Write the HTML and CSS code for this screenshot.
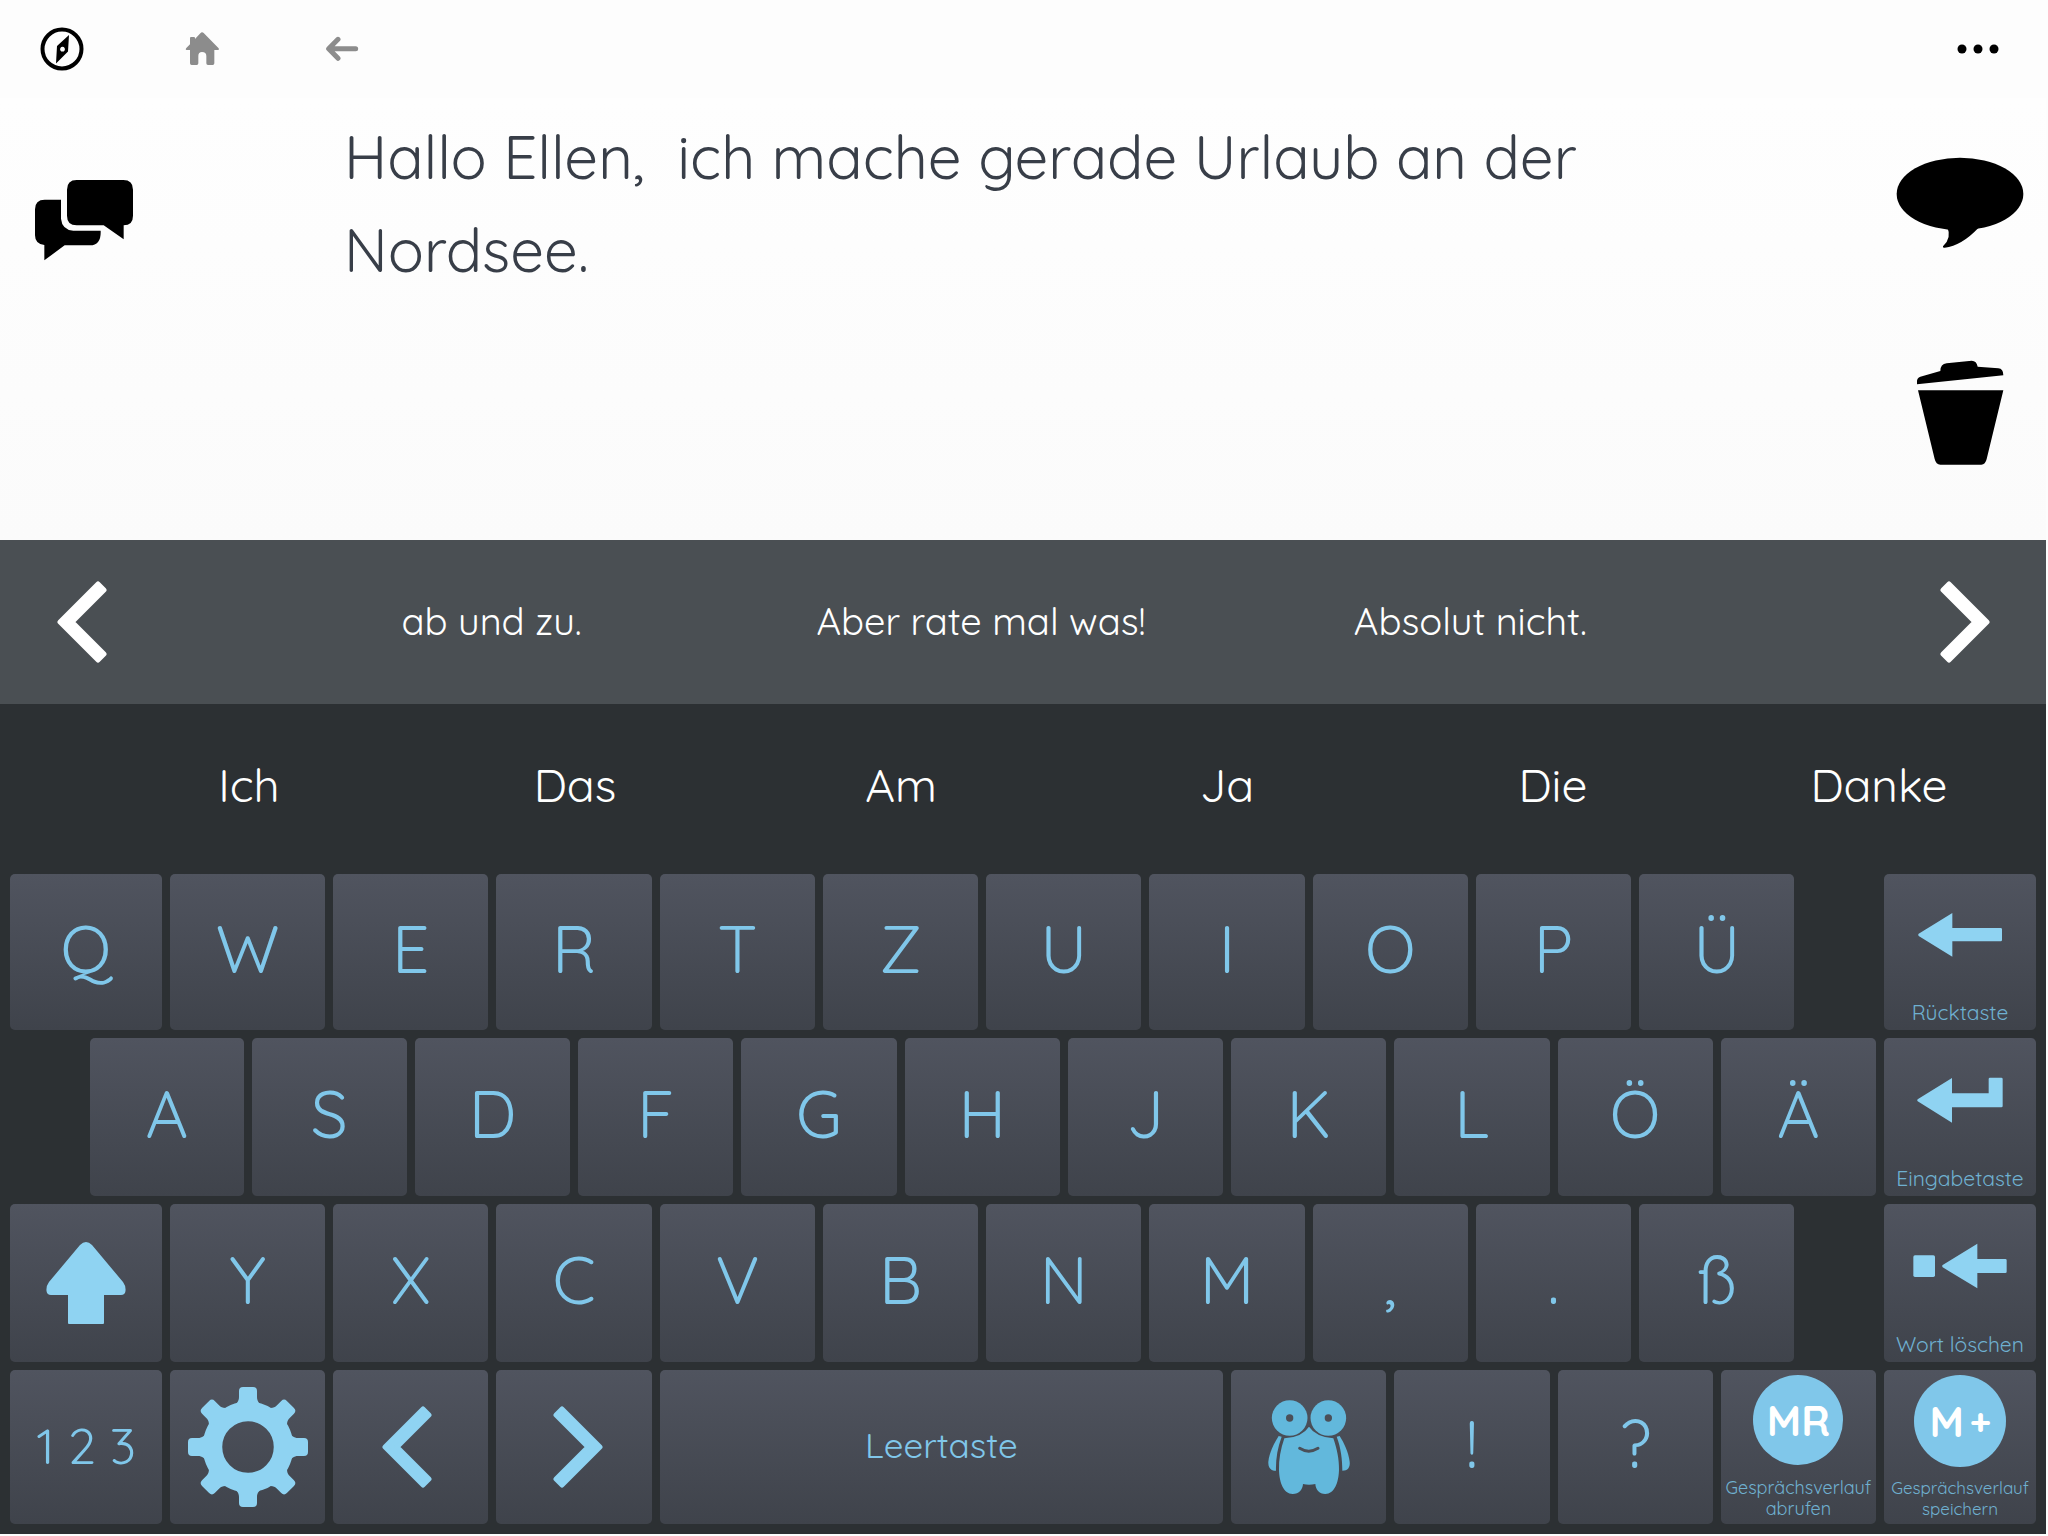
FILE: index.html
```html
<!DOCTYPE html>
<html lang="de">
<head>
    <meta charset="UTF-8">
    <meta name="viewport" content="width=device-width, initial-scale=1.0">
    <title>Tastatur</title>
    <link rel="stylesheet" href="styles.css">
</head>
<body>

    <div class="app">
        <header class="topbar">
            <button type="button" class="nav-btn" aria-label="Navigation">
                <svg width="44" height="44" viewBox="40 26 44 44">
                    <circle cx="62" cy="48" r="19.5" fill="none" stroke="#000" stroke-width="4"/>
                    <path fill-rule="evenodd" d="M69 34L68 50.500L56 62.500L57 45ZM62.500 45.800a2.400 2.400 0 1 0 0.010 0Z"/>
                </svg>
            </button>
            <button type="button" class="nav-btn" aria-label="Startseite">
                <svg class="grey" width="34" height="34" viewBox="556 96 102 102">
                    <path d="M607 97Q610 97 612 99L657 145Q659 150 654 150H644V190Q644 195 639 195H625Q620 195 620 190V168Q620 156 607 156Q596 156 596 168V190Q596 195 591 195H576Q571 195 571 190V150H561Q556 149 560 144L571 133V114Q571 111 574 111H583Q586 111 586 114V117L602 100Q605 97 607 97Z"/>
                </svg>
            </button>
            <button type="button" class="nav-btn" aria-label="Zurück">
                <svg class="grey-line" width="34" height="26" viewBox="977 107 102 78">
                    <path d="M1069 145.500H990M1016 117L988 145.500L1016 174"/>
                </svg>
            </button>
            <button type="button" class="nav-btn menu-btn" aria-label="Mehr">
                <svg width="42" height="10" viewBox="0 0 42 10">
                    <circle cx="5" cy="5" r="4.500"/>
                    <circle cx="21" cy="5" r="4.500"/>
                    <circle cx="37" cy="5" r="4.500"/>
                </svg>
            </button>
        </header>

        <main class="message">
            <button type="button" class="chat-btn" aria-label="Gespräche">
                <svg width="100" height="82" viewBox="104 537 300 246">
                    <path d="M232 540H372Q401 540 401 569V647Q401 676 373 676V718L313 676H232Q203 676 203 647V569Q203 540 232 540Z"/>
                    <path d="M136 599H185V656Q188 689 222 692H304Q306 736 272 736H196L135 781V735Q107 732 107 706V628Q107 599 136 599Z"/>
                </svg>
            </button>
            <textarea class="message-text" aria-label="Nachricht" spellcheck="false">Hallo Ellen,  ich mache gerade Urlaub an der Nordsee.</textarea>
            <div class="message-actions">
                <button type="button" aria-label="Sprechen">
                    <svg width="128" height="92" viewBox="168 469 384 276">
                        <ellipse cx="360" cy="580" rx="190" ry="109"/>
                        <path d="M322 680Q336 712 309 737Q307 742 314 741Q365 735 415 682Z"/>
                    </svg>
                </button>
                <button type="button" aria-label="Löschen">
                    <svg width="88" height="106" viewBox="228 1087 264 318">
                        <path d="M231 1160V1150Q231 1141 241 1137L301 1120Q301 1099 320 1097L395 1089Q410 1089 413 1107L475 1112Q490 1113 490 1133Z"/>
                        <path d="M234 1178H490L440 1384Q436 1401 424 1401H301Q288 1401 284 1384Z"/>
                    </svg>
                </button>
            </div>
        </main>

        <section class="phrases">
            <button type="button" class="page-btn" aria-label="Vorherige">
                <svg width="50" height="84" viewBox="0 0 50 84">
                    <path class="chevron" d="M3 42L41 4L47 10L15 42L47 74L41 80Z"/>
                </svg>
            </button>
            <div class="phrase-list">
                <button type="button">ab und zu.</button>
                <button type="button">Aber rate mal was!</button>
                <button type="button">Absolut nicht.</button>
            </div>
            <button type="button" class="page-btn" aria-label="Nächste">
                <svg width="50" height="84" viewBox="0 0 50 84">
                    <path class="chevron" d="M47 42L9 4L3 10L35 42L3 74L9 80Z"/>
                </svg>
            </button>
        </section>

        <section class="words">
            <button type="button">Ich</button>
            <button type="button">Das</button>
            <button type="button">Am</button>
            <button type="button">Ja</button>
            <button type="button">Die</button>
            <button type="button">Danke</button>
        </section>

        <section class="keyboard">
            <button type="button" class="key">Q</button>
            <button type="button" class="key">W</button>
            <button type="button" class="key">E</button>
            <button type="button" class="key">R</button>
            <button type="button" class="key">T</button>
            <button type="button" class="key">Z</button>
            <button type="button" class="key">U</button>
            <button type="button" class="key">I</button>
            <button type="button" class="key">O</button>
            <button type="button" class="key">P</button>
            <button type="button" class="key">Ü</button>
            <button type="button" class="key action last">
                <span class="icon">
                    <svg width="86" height="46" viewBox="894 215 258 138">
                        <path d="M899 280L1000 218V263H1145Q1149 263 1149 267V299Q1149 303 1145 303H1000V349L899 287Q896 283 899 280Z"/>
                    </svg>
                </span>
                <span class="caption">Rücktaste</span>
            </button>

            <button type="button" class="key indent">A</button>
            <button type="button" class="key">S</button>
            <button type="button" class="key">D</button>
            <button type="button" class="key">F</button>
            <button type="button" class="key">G</button>
            <button type="button" class="key">H</button>
            <button type="button" class="key">J</button>
            <button type="button" class="key">K</button>
            <button type="button" class="key">L</button>
            <button type="button" class="key">Ö</button>
            <button type="button" class="key">Ä</button>
            <button type="button" class="key action last">
                <span class="icon">
                    <svg width="88" height="46" viewBox="892 708 264 138">
                        <path d="M897 775L1000 711V757H1110V714Q1110 710 1114 710H1148Q1152 710 1152 714V795Q1152 799 1148 799H1000V845L897 781Q894 778 897 775Z"/>
                    </svg>
                </span>
                <span class="caption">Eingabetaste</span>
            </button>

            <button type="button" class="key" aria-label="Umschalttaste">
                <svg width="80" height="84" viewBox="0 0 80 84">
                    <path d="M34 4Q40 -2 46 4L77 41Q80 45 79.500 50Q79 54 75 54H58V82Q58 83 57 83H23Q22 83 22 82V54H5Q1 54 0.500 50Q0 45 3 41Z"/>
                </svg>
            </button>
            <button type="button" class="key">Y</button>
            <button type="button" class="key">X</button>
            <button type="button" class="key">C</button>
            <button type="button" class="key">V</button>
            <button type="button" class="key">B</button>
            <button type="button" class="key">N</button>
            <button type="button" class="key">M</button>
            <button type="button" class="key">,</button>
            <button type="button" class="key">.</button>
            <button type="button" class="key">ß</button>
            <button type="button" class="key action last">
                <span class="icon">
                    <svg width="96" height="46" viewBox="878 157 288 138">
                        <rect x="882" y="194" width="65" height="65" rx="5"/>
                        <path d="M970 223L1074 159V205H1158Q1162 205 1162 209V243Q1162 247 1158 247H1074V293L970 230Q967 226 970 223Z"/>
                    </svg>
                </span>
                <span class="caption">Wort löschen</span>
            </button>

            <button type="button" class="key numbers">1 2 3</button>
            <button type="button" class="key" aria-label="Einstellungen">
                <svg width="120" height="120" viewBox="-60 -60 120 120">
                    <defs>
                        <path id="tooth" d="M-17 -40C-11 -43 -9 -46 -9 -50V-56Q-9 -60 -5 -60H5Q9 -60 9 -56V-50C9 -46 11 -43 17 -40Z"/>
                    </defs>
                    <circle r="35.500" fill="none" stroke="#8fd3f2" stroke-width="19.500"/>
                    <use href="#tooth"/>
                    <use href="#tooth" transform="rotate(45)"/>
                    <use href="#tooth" transform="rotate(90)"/>
                    <use href="#tooth" transform="rotate(135)"/>
                    <use href="#tooth" transform="rotate(180)"/>
                    <use href="#tooth" transform="rotate(225)"/>
                    <use href="#tooth" transform="rotate(270)"/>
                    <use href="#tooth" transform="rotate(315)"/>
                </svg>
            </button>
            <button type="button" class="key" aria-label="Cursor links">
                <svg width="58" height="84" viewBox="0 0 58 84">
                    <path class="chevron" d="M3 42L41 4L47 10L15 42L47 74L41 80Z"/>
                </svg>
            </button>
            <button type="button" class="key" aria-label="Cursor rechts">
                <svg width="58" height="84" viewBox="-8 0 58 84">
                    <path class="chevron" d="M47 42L9 4L3 10L35 42L3 74L9 80Z"/>
                </svg>
            </button>
            <button type="button" class="key space">Leertaste</button>
            <button type="button" class="key" aria-label="Figur">
                <svg class="monster" width="84" height="96" viewBox="198 147 252 288">
                    <circle cx="266" cy="204" r="53.500"/>
                    <circle cx="382" cy="204" r="53.500"/>
                    <path d="M324 230Q344 260 397 265C408 296 415 330 414 360C413 398 400 432 373 432C354 432 344 418 343 402Q324 406 306 402C305 418 295 432 275 432C248 432 235 398 234 360C233 330 239 296 250 265Q303 262 324 230Z"/>
                    <path d="M233 258L242 260C229 294 224 330 225 362C208 362 201 352 202 335C205 308 220 278 233 258Z"/>
                    <path d="M416 258L407 260C420 294 424 330 424 362C440 362 448 352 446 335C443 308 429 278 416 258Z"/>
                    <circle class="dark" cx="266" cy="204" r="11"/>
                    <circle class="dark" cx="382" cy="204" r="11"/>
                    <path class="smile" d="M296 295Q323 312 351 295"/>
                </svg>
            </button>
            <button type="button" class="key">!</button>
            <button type="button" class="key">?</button>
            <button type="button" class="key memory">
                <span class="badge">MR</span>
                <span class="caption">Gesprächsverlauf<br>abrufen</span>
            </button>
            <button type="button" class="key memory save last">
                <span class="badge">M<span class="plus">+</span></span>
                <span class="caption">Gesprächsverlauf<br>speichern</span>
            </button>
        </section>
    </div>

</body>
</html>
```
FILE: styles.css
```css
* {
    box-sizing: border-box;
}
body {
    margin: 0;
    padding: 0 2px 2px 0;
    background: #fdfdfd;
    font-family: Quicksand, Lato, sans-serif;
}
button {
    display: flex;
    align-items: center;
    justify-content: center;
    padding: 0;
    border: none;
    background: none;
    color: inherit;
    font: inherit;
    cursor: pointer;
}
svg {
    display: block;
}
.app {
    display: flex;
    flex-direction: column;
    min-height: calc(100vh - 2px);
    background: #2c3033;
}

/* top bar */
.topbar {
    display: flex;
    gap: 16px;
    height: 98px;
    padding-right: 6px;
    background: #fdfdfd;
}
.nav-btn {
    width: 124px;
}
.menu-btn {
    margin-left: auto;
}
.grey {
    fill: #8c8c8c;
}
.grey-line {
    fill: none;
    stroke: #8c8c8c;
    stroke-width: 15;
    stroke-linecap: round;
    stroke-linejoin: round;
}

/* message */
.message {
    display: flex;
    height: 442px;
    background: linear-gradient(#fefefe, #fbfbfb);
}
.chat-btn {
    width: 168px;
    height: 244px;
}
.message-text {
    flex: 1;
    margin: 0 96px 0 176px;
    padding: 12px 0 0;
    border: none;
    outline: none;
    resize: none;
    overflow: hidden;
    background: none;
    color: #383e48;
    font-family: inherit;
    font-size: 60px;
    line-height: 93px;
}
.message-actions {
    display: flex;
    flex-direction: column;
    width: 172px;
    padding-bottom: 22px;
}
.message-actions button {
    flex: 1;
}

/* phrases and words */
.phrases {
    display: flex;
    height: 164px;
    background: #4a4f53;
    color: #fff;
    font-size: 38px;
}
.page-btn {
    width: 163px;
}
.phrase-list {
    flex: 1;
    display: grid;
    grid-template-columns: repeat(3, 1fr);
    margin: 0 168px 0 84px;
}
.phrase-list button {
    padding-bottom: 2px;
}
.chevron {
    fill: currentColor;
    stroke: currentColor;
    stroke-width: 5;
    stroke-linejoin: round;
}
.words {
    display: grid;
    grid-template-columns: repeat(6, 1fr);
    height: 170px;
    padding: 0 4px 8px 86px;
    color: #fff;
    font-size: 46px;
}

/* keyboard */
.keyboard {
    flex: 1;
    display: grid;
    grid-template-columns: repeat(2, 72px) repeat(21, 1fr) repeat(2, 72px);
    grid-template-rows: 156fr 158fr 158fr 154fr;
    gap: 8px;
    padding: 0 10px 10px;
}
.key {
    grid-column: span 2;
    padding-bottom: 8px;
    border-radius: 5px;
    background: linear-gradient(#50545f, #3f434b);
    color: #80c7ea;
    font-size: 66px;
    fill: #8fd3f2;
}
.key > svg {
    margin-bottom: -8px;
    color: #8fd3f2;
}
.key.indent {
    grid-column: 2 / span 2;
}
.key.last {
    grid-column: 24 / span 2;
}
.key.space {
    grid-column: span 7;
    padding-bottom: 4px;
    font-size: 35px;
}
.key.numbers {
    padding-bottom: 4px;
    font-size: 50px;
}
.key.action {
    flex-direction: column;
    padding-bottom: 4px;
}
.icon {
    flex: 1;
    display: flex;
    align-items: center;
    padding-bottom: 3px;
}
.caption {
    color: #6fb0d0;
    font-size: 21px;
    line-height: 28px;
}
.monster {
    fill: #62b8dc;
}
.dark {
    fill: #4b4f58;
}
.smile {
    fill: none;
    stroke: #4b4f58;
    stroke-width: 9;
    stroke-linecap: round;
}
.key.memory {
    flex-direction: column;
    justify-content: space-between;
    padding: 5px 0;
}
.badge {
    display: flex;
    align-items: center;
    justify-content: center;
    gap: 6px;
    width: 90px;
    height: 90px;
    border-radius: 50%;
    background: #80c7ea;
    color: #fff;
    font-size: 42px;
    font-weight: bold;
}
.save .badge {
    width: 92px;
    height: 92px;
}
.plus {
    font-size: 36px;
}
.memory .caption {
    font-size: 18px;
    line-height: 21px;
}
.save .caption {
    font-size: 17px;
}
```
